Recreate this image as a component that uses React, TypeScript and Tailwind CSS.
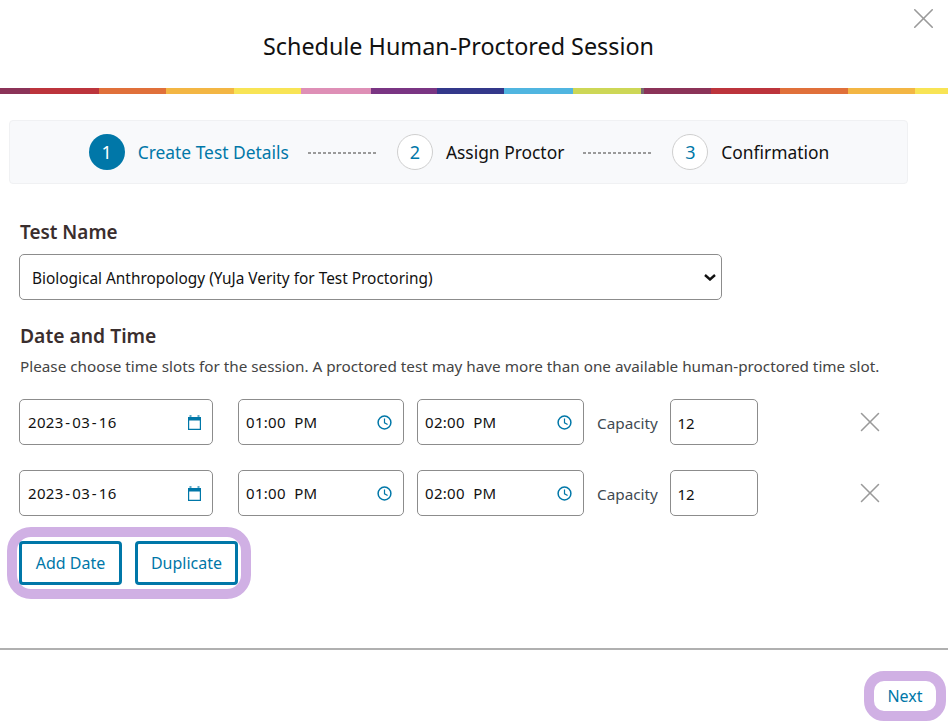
import { X } from "lucide-react";

const stripe = [
  ["w-[30px]", "bg-[#8b3358]"],
  ["w-[69px]", "bg-[#bc343c]"],
  ["w-[67px]", "bg-[#e0703a]"],
  ["w-[68px]", "bg-[#f3b644]"],
  ["w-[67px]", "bg-[#f8e455]"],
  ["w-[70px]", "bg-[#de8fb6]"],
  ["w-[66px]", "bg-[#7a3583]"],
  ["w-[67px]", "bg-[#33388a]"],
  ["w-[69px]", "bg-[#50b5e0]"],
  ["w-[68px]", "bg-[#cdd756]"],
  ["w-[3px]", "bg-[#77696f]"],
  ["w-[67px]", "bg-[#8b3358]"],
  ["w-[69px]", "bg-[#bc343c]"],
  ["w-[68px]", "bg-[#e0703a]"],
  ["w-[67px]", "bg-[#f3b644]"],
  ["w-[33px]", "bg-[#f8e455]"],
];

function CalendarIcon() {
  return (
    <svg width="13" height="15" viewBox="0 0 13 15" className="text-[#0077a8]">
      <rect x="1.5" y="0" width="2" height="2" fill="#5fa9c8" />
      <rect x="9.5" y="0" width="2" height="2" fill="#5fa9c8" />
      <rect x="0" y="2" width="13" height="3.5" fill="currentColor" />
      <path d="M0.6 5v9.4h11.8V5" fill="none" stroke="currentColor" strokeWidth="1.2" />
    </svg>
  );
}

function ClockIcon() {
  return (
    <svg width="15" height="15" viewBox="0 0 15 15" fill="none" stroke="#0077a8" className="shrink-0">
      <circle cx="7.5" cy="7.5" r="6.4" strokeWidth="1.5" />
      <path d="M7.5 3.6V7.8L10.6 9.6" strokeWidth="1.2" />
    </svg>
  );
}

function Field({ children, width, icon }: { children: React.ReactNode; width: string; icon: React.ReactNode }) {
  return (
    <div className={`flex h-[46px] items-center justify-between rounded-[5px] border border-[#8c8c8c] pl-2 pr-[11px] text-[15px] tracking-[0.3px] text-[#111] ${width}`}>
      <span>{children}</span>
      {icon}
    </div>
  );
}

function SlotRow() {
  return (
    <div className="flex h-[46px] items-center">
      <Field width="w-[194px]" icon={<CalendarIcon />}>
        2023<span className="mx-[1.8px]">-</span>03<span className="mx-[1.8px]">-</span>16
      </Field>
      <div className="ml-[25px]">
        <Field width="w-[166px] whitespace-pre" icon={<ClockIcon />}>
          <span className="-ml-px">01:00  PM</span>
        </Field>
      </div>
      <div className="ml-[13px]">
        <Field width="w-[167px] whitespace-pre" icon={<ClockIcon />}>
          <span className="-ml-px">02:00  PM</span>
        </Field>
      </div>
      <span className="ml-[13px] w-[61px] pt-0.5 text-[15.3px] text-[#3f4a52]">Capacity</span>
      <div className="ml-3 flex h-[46px] w-[88px] items-center rounded-[5px] border border-[#8c8c8c] pl-[6.5px] pt-0.5 text-[15px] text-[#111]">
        12
      </div>
      <X size={34} strokeWidth={1.1} className="ml-[95px] text-[#9a9a9a]" />
    </div>
  );
}

function Step({ n, label, active }: { n: number; label: string; active?: boolean }) {
  return (
    <div className="flex items-center gap-[13px]">
      <div
        className={
          active
            ? "flex h-9 w-9 items-center justify-center rounded-full bg-[#0077a8] text-[18px] text-white"
            : "flex h-9 w-9 items-center justify-center rounded-full border border-[#cfcfcf] bg-white text-[18px] text-[#0077a8]"
        }
      >
        {n}
      </div>
      <span className={active ? "text-[17.4px] text-[#0077a8]" : "text-[17.4px] text-[#111]"}>{label}</span>
    </div>
  );
}

function Dots() {
  return (
    <div className="mx-[19px] mt-0.5 h-[2px] w-[70px] bg-[repeating-linear-gradient(90deg,#9a9a9a_0_3px,transparent_3px_5px)]" />
  );
}

export default function App() {
  return (
    <div className="relative h-[728px] w-[948px] overflow-hidden bg-white font-['Noto_Sans',sans-serif]">
      <X size={35} strokeWidth={1.1} className="absolute left-[906px] top-[1px] text-[#9a9a9a]" />

      <header className="flex h-[88px] w-[917px] items-center justify-center pt-[6px]">
        <h1 className="text-[23.35px] text-[#111]">Schedule Human-Proctored Session</h1>
      </header>
      <div className="flex h-[6px]">
        {stripe.map(([w, bg], i) => (
          <div key={i} className={`${w} ${bg}`} />
        ))}
      </div>

      <div className="mx-[9px] mt-[26px] flex h-16 w-[899px] items-center justify-center rounded-[4px] border border-[#f0f1f3] bg-[#f8f9fb] pl-[1px]">
        <Step n={1} label="Create Test Details" active />
        <Dots />
        <Step n={2} label="Assign Proctor" />
        <Dots />
        <Step n={3} label="Confirmation" />
      </div>

      <div className="px-[19px]">
        <h2 className="mt-[35px] pl-px text-[18.9px] leading-[26px] font-semibold text-[#3a2e2e]">Test Name</h2>
        <div className="relative mt-[9px] h-[46px] w-[703px]">
          <select className="h-[46px] w-full appearance-none rounded-[5px] border border-[#8c8c8c] bg-white pl-3 pt-1 text-[15.4px] text-[#111]">
            <option>Biological Anthropology (YuJa Verity for Test Proctoring)</option>
          </select>
          <svg width="12" height="7" viewBox="0 0 12 7" fill="none" stroke="#111" strokeWidth="2.4" className="absolute left-[685px] top-[20px]">
            <path d="M1 1l5 4.5L11 1" />
          </svg>
        </div>
        <h2 className="mt-[23px] pl-px text-[19.3px] leading-[26px] font-semibold text-[#3a2e2e]">Date and Time</h2>
        <p className="mt-[7px] pl-px text-[15.28px] leading-[20px] text-[#444]">
          Please choose time slots for the session. A proctored test may have more than one available human-proctored time slot.
        </p>
        <div className="mt-[23px] flex flex-col gap-[25px]">
          <SlotRow />
          <SlotRow />
        </div>
        <div className="-ml-3 mt-[11px] inline-flex gap-[13px] rounded-[24px] border-[10px] border-[#d0b0e4] pl-[2px] pr-[3px] py-1">
          <button className="h-11 w-[103px] rounded-[4px] border-[3px] border-[#0077a8] text-[16px] text-[#0077a8]">Add Date</button>
          <button className="h-11 w-[103px] rounded-[4px] border-[3px] border-[#0077a8] text-[16px] text-[#0077a8]">Duplicate</button>
        </div>
      </div>

      <div className="mt-[49px] h-[2px] bg-[#b0b0b0]" />
      <div className="mr-[2px] mt-[21px] flex justify-end">
        <button className="flex h-[50px] w-[82px] items-center justify-center rounded-[20px] border-[10px] border-[#d0b0e4] text-[16px] text-[#0077a8]">
          Next
        </button>
      </div>
    </div>
  );
}
